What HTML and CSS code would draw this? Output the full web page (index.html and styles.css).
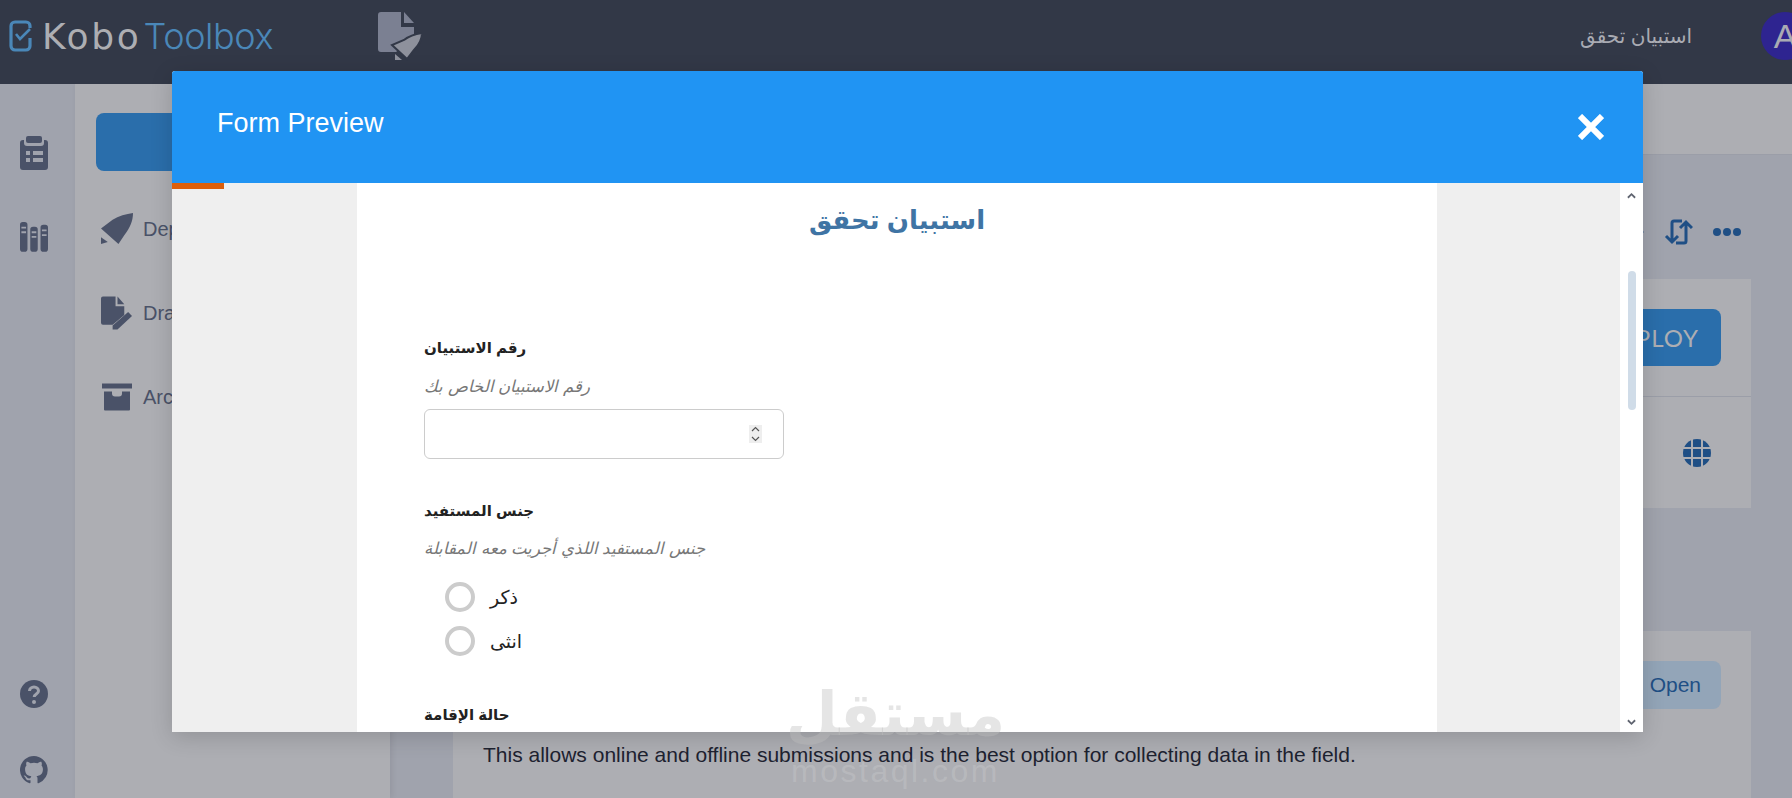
FILE: index.html
```html
<!DOCTYPE html>
<html lang="en">
<head>
    <meta charset="UTF-8">
    <meta name="viewport" content="width=device-width, initial-scale=1.0">
    <title>KoboToolbox - Form Preview</title>
    <link rel="stylesheet" href="styles.css">
</head>
<body>
    <header class="topbar">
        <div class="logo">
            <svg class="logo-mark" viewBox="0 0 23 32" fill="none" stroke="#4a87b8" stroke-width="3.200">
                <path d="M21 8V6a4 4 0 0 0-4-4H6a4 4 0 0 0-4 4v20a4 4 0 0 0 4 4h11a4 4 0 0 0 4-4v-8"/>
                <path d="M7 14l4 5 10-10" stroke-width="2.600"/>
            </svg>
            <span class="logo-text"><b>Kobo</b>Toolbox</span>
        </div>
        <svg class="form-icon" viewBox="0 0 44 49">
            <path d="M3 0h20v15h13v12L18 40H3a3 3 0 0 1-3-3V3a3 3 0 0 1 3-3z" fill="#7b8092"/>
            <path d="M26 0l10 11H26z" fill="#7b8092"/>
            <path d="M44 21c-7 1-13 3-18 7L14 33l15 14 7-9c5-5 8-11 8-17z" fill="#8e919c" stroke="#323847" stroke-width="2"/>
            <path d="M17 42l7 6h-7z" fill="#8e919c"/>
        </svg>
        <div class="topbar-right">
            <span class="form-name" dir="rtl">استبيان تحقق</span>
            <span class="avatar">A</span>
        </div>
    </header>

    <div class="page">
        <nav class="rail">
            <div class="rail-group">
                <svg class="rail-icon" viewBox="0 0 28 34">
                    <path d="M8 0h12a2 2 0 0 1 2 2v3a2 2 0 0 1-2 2H8a2 2 0 0 1-2-2V2a2 2 0 0 1 2-2z"/>
                    <path fill-rule="evenodd" d="M3 4h1v3a3 3 0 0 0 3 3h14a3 3 0 0 0 3-3V4h1a3 3 0 0 1 3 3v24a3 3 0 0 1-3 3H3a3 3 0 0 1-3-3V7a3 3 0 0 1 3-3zM6 15v4h4v-4zM13 15v4h10v-4zM6 22v4h4v-4zM13 22v4h10v-4z"/>
                </svg>
                <svg class="rail-icon" viewBox="0 0 30 32">
                    <path fill-rule="evenodd" d="M3 0h2a3 3 0 0 1 3 3v26a3 3 0 0 1-3 3H3a3 3 0 0 1-3-3V3a3 3 0 0 1 3-3zM1.500 5v2h5V5zM1.500 10v2h5v-2z"/>
                    <path fill-rule="evenodd" d="M14 5h2a3 3 0 0 1 3 3v21a3 3 0 0 1-3 3h-2a3 3 0 0 1-3-3V8a3 3 0 0 1 3-3zM12.500 10v2h5v-2zM12.500 15v2h5v-2z"/>
                    <path fill-rule="evenodd" d="M25 3h2a3 3 0 0 1 3 3v23a3 3 0 0 1-3 3h-2a3 3 0 0 1-3-3V6a3 3 0 0 1 3-3zM23.500 8v2h5V8zM23.500 13v2h5v-2z"/>
                </svg>
            </div>
            <div class="rail-group rail-bottom">
                <svg class="rail-icon" viewBox="0 0 28 28">
                    <circle cx="14" cy="14" r="14"/>
                    <path d="M9.500 11a4.500 4 0 0 1 9 0c0 3-4.300 3-4.300 6" fill="none" stroke="#a0a3ad" stroke-width="3"/>
                    <circle cx="14" cy="22" r="2" fill="#a0a3ad"/>
                </svg>
                <svg class="rail-icon" viewBox="0 0 16 16">
                    <path d="M8 0a8 8 0 0 0-2.500 15.600c.4.100.5-.2.500-.4v-1.400c-2.200.5-2.700-1-2.700-1-.4-.9-.9-1.200-.9-1.200-.7-.5.100-.5.100-.5.800.1 1.200.8 1.200.8.700 1.200 1.900.9 2.300.7.100-.5.300-.9.500-1.100-1.800-.2-3.600-.9-3.600-4 0-.9.300-1.600.8-2.100-.1-.2-.4-1 .1-2.100 0 0 .7-.2 2.200.8a7.600 7.600 0 0 1 4 0c1.500-1 2.200-.8 2.200-.8.500 1.100.2 1.900.1 2.100.5.600.8 1.300.8 2.100 0 3.100-1.900 3.700-3.700 3.900.3.300.6.800.6 1.500v2.200c0 .2.100.5.600.4A8 8 0 0 0 8 0z"/>
                </svg>
            </div>
        </nav>

        <aside class="sidebar">
            <div class="new-btn"></div>
            <ul class="side-list">
                <li>
                    <svg class="side-icon" viewBox="0 0 33 33">
                        <path d="M33 0C26 1 18 3 12 7L0 16l18 16 6-9C30 15 33 8 33 0z"/>
                        <path d="M0 25l7 5-7 2z"/>
                    </svg>
                    Deployed
                </li>
                <li>
                    <svg class="side-icon" viewBox="0 0 33 34">
                        <path d="M2 0h13v10h9v9L12 29H2a2 2 0 0 1-2-2V2a2 2 0 0 1 2-2z"/>
                        <path d="M17 0l7 8h-7z"/>
                        <path d="M28 16l4 4-15 14-5 0 0-4z"/>
                    </svg>
                    Draft
                </li>
                <li>
                    <svg class="side-icon" viewBox="-1 0 32 27">
                        <path d="M0 0h30v5H0z"/>
                        <path d="M2 8h8v2a3 3 0 0 0 3 3h4a3 3 0 0 0 3-3V8h8v18a1 1 0 0 1-1 1H3a1 1 0 0 1-1-1z"/>
                    </svg>
                    Archived
                </li>
            </ul>
        </aside>

        <main class="content">
            <div class="form-tabs"></div>
            <div class="toolbar">
                <svg class="tool-icon tool-chev" viewBox="0 0 10 10" fill="none" stroke="#1f4f85" stroke-width="2.500"><path d="M3 1l4 4-4 4"/></svg>
                <svg class="tool-icon tool-swap" viewBox="0 0 29 26" fill="none" stroke="#1f4f85" stroke-width="3">
                    <path d="M18 2h-8a2 2 0 0 0-2 2v19M2 17l6 6 6-6"/>
                    <path d="M12 24h8a2 2 0 0 0 2-2V3M16 9l6-6 6 6"/>
                </svg>
                <span class="dots"><i></i><i></i><i></i></span>
            </div>

            <section class="card">
                <div class="card-row">
                    <button class="deploy-btn">DEPLOY</button>
                </div>
                <div class="card-row card-row-lang">
                    <svg class="globe" viewBox="0 0 28 28">
                        <clipPath id="globe-clip"><circle cx="14" cy="14" r="14"/></clipPath>
                        <g clip-path="url(#globe-clip)" fill="#1f4f85">
                            <rect x="0" y="0" width="8" height="8"/><rect x="10" y="0" width="8" height="8"/><rect x="20" y="0" width="8" height="8"/>
                            <rect x="0" y="10" width="8" height="8"/><rect x="10" y="10" width="8" height="8"/><rect x="20" y="10" width="8" height="8"/>
                            <rect x="0" y="20" width="8" height="8"/><rect x="10" y="20" width="8" height="8"/><rect x="20" y="20" width="8" height="8"/>
                        </g>
                    </svg>
                </div>
            </section>

            <section class="card card-collect">
                <div class="collect-head">
                    <button class="open-btn">Open</button>
                </div>
                <p class="collect-text">This allows online and offline submissions and is the best option for collecting data in the field.</p>
            </section>
        </main>
    </div>

    <div class="modal">
        <div class="modal-head">
            <h2>Form Preview</h2>
            <svg class="close-icon" viewBox="0 0 26 26" stroke="#fff" stroke-width="6"><path d="M2 2l22 22M24 2L2 24"/></svg>
        </div>
        <div class="modal-body">
            <div class="progress"></div>
            <div class="form-gutter form-gutter-left"></div>
            <form class="form-sheet">
                <h1 class="form-title" dir="rtl">استبيان تحقق</h1>

                <div class="question q-first">
                    <label class="q-label"><span dir="rtl">رقم الاستبيان</span></label>
                    <p class="q-hint"><span dir="rtl">رقم الاستبيان الخاص بك</span></p>
                    <div class="num-wrap">
                        <input class="num-input" type="number">
                        <span class="spinner">
                            <svg viewBox="0 0 13 18" fill="none" stroke="#555" stroke-width="1.200"><path d="M3 6l3.500-3.500L10 6M3 12l3.500 3.500L10 12"/></svg>
                        </span>
                    </div>
                </div>

                <div class="question q-second">
                    <label class="q-label"><span dir="rtl">جنس المستفيد</span></label>
                    <p class="q-hint"><span dir="rtl">جنس المستفيد اللذي أجريت معه المقابلة</span></p>
                    <div class="options">
                        <label class="option"><input type="radio" name="gender"><span dir="rtl">ذكر</span></label>
                        <label class="option"><input type="radio" name="gender"><span dir="rtl">انثى</span></label>
                    </div>
                </div>

                <div class="question q-third">
                    <label class="q-label"><span dir="rtl">حالة الإقامة</span></label>
                </div>
            </form>
            <div class="form-gutter form-gutter-right"></div>
            <div class="scroll-col">
                <svg class="scroll-arrow" viewBox="0 0 10 7" fill="none" stroke="#5f6470" stroke-width="2"><path d="M1 6l4-4 4 4"/></svg>
                <div class="scroll-thumb"></div>
                <svg class="scroll-arrow scroll-arrow-down" viewBox="0 0 10 7" fill="none" stroke="#5f6470" stroke-width="2"><path d="M1 1l4 4 4-4"/></svg>
            </div>
        </div>
    </div>

    <div class="watermark">
        <span class="wm-ar" dir="rtl">مستقل</span>
        <span class="wm-en">mostaql.com</span>
    </div>
</body>
</html>
```

FILE: styles.css
```css
/* Global */
* {
    box-sizing: border-box;
}

html, body {
    height: 100%;
}

body {
    margin: 0;
    height: 798px;
    overflow: hidden;
    position: relative;
    font-family: 'Liberation Sans', 'DejaVu Sans', sans-serif;
    background: #a0a3ad;
    color: #4a5268;
}

/* Top bar */
.topbar {
    height: 84px;
    background: #323847;
    display: flex;
    align-items: center;
    position: relative;
}

.logo {
    display: flex;
    align-items: center;
    margin-left: 9px;
    width: 369px;
    margin-top: -12px;
}

.logo-mark {
    width: 23px;
    height: 32px;
}

.logo-text {
    margin-left: 10px;
    font-family: 'Inter', sans-serif;
    font-size: 36px;
    letter-spacing: -0.4px;
    font-weight: 300;
    color: #4a87b8;
}

.logo-text b {
    font-family: 'DejaVu Sans', sans-serif;
    font-weight: normal;
    letter-spacing: 2.700px;
    margin-right: 2px;
    color: #adaeb3;
}

.form-icon {
    width: 44px;
    height: 49px;
    margin-top: -11px;
}

.topbar-right {
    margin-left: auto;
    display: flex;
    align-items: center;
    margin-top: -12px;
    margin-right: -17px;
}

.form-name {
    font-size: 20px;
    color: #a9abb3;
    margin-right: 69px;
}

.avatar {
    width: 48px;
    height: 48px;
    border-radius: 50%;
    background: #2e2490;
    color: #a9abb3;
    font-size: 34px;
    display: flex;
    align-items: center;
    justify-content: center;
}

/* Page frame */
.page {
    display: flex;
    height: 714px;
}

.rail {
    width: 75px;
    display: flex;
    flex-direction: column;
    justify-content: space-between;
    background: #a0a3ad;
    padding: 52px 8px 14px 0;
}

.rail-group {
    display: flex;
    flex-direction: column;
    align-items: center;
    gap: 52px;
}

.rail-bottom {
    gap: 48px;
}

.rail-icon {
    width: 28px;
    fill: #4a5268;
}

.sidebar {
    width: 315px;
    background: #adaeb3;
    padding: 29px 20px 0 21px;
    box-shadow: 2px 0 6px rgba(0, 0, 0, 0.08);
}

.new-btn {
    height: 58px;
    border-radius: 8px;
    background: #2a6eab;
}

.side-list {
    list-style: none;
    margin: 41px 0 0;
    padding: 0 0 0 5px;
}

.side-list li {
    display: flex;
    align-items: center;
    gap: 10px;
    height: 34px;
    margin-bottom: 50px;
    font-size: 20px;
}

.side-icon {
    width: 32px;
    height: 34px;
    fill: #4a5268;
}

/* Main column behind the modal */
.content {
    flex: 1;
    padding-right: 41px;
}

.form-tabs {
    height: 71px;
    margin-right: -41px;
    background: #adaeb3;
    border-bottom: 1px solid #9b9ea8;
}

.toolbar {
    height: 124px;
    display: flex;
    align-items: center;
    justify-content: flex-end;
    padding: 30px 10px 0 62px;
}

.tool-icon {
    display: block;
}

.tool-chev {
    width: 10px;
    height: 10px;
    margin-right: 19px;
}

.tool-swap {
    width: 29px;
    height: 26px;
    margin-right: 20px;
}

.dots {
    display: flex;
    gap: 2px;
}

.dots i {
    width: 8px;
    height: 8px;
    border-radius: 50%;
    background: #1f4f85;
}

.card {
    margin-left: 62px;
    background: #adaeb3;
}

.card-row {
    height: 118px;
    display: flex;
    align-items: center;
    justify-content: flex-end;
    padding-right: 30px;
    border-bottom: 1px solid #9b9ea8;
}

.card-row-lang {
    height: 111px;
    border-bottom: none;
    padding-right: 40px;
}

.deploy-btn {
    width: 150px;
    height: 57px;
    border: none;
    border-radius: 8px;
    background: #2a6eab;
    color: #adaeb3;
    font-family: 'Lato', sans-serif;
    font-size: 24px;
    letter-spacing: 1px;
    text-align: right;
    padding: 0 22px 0 0;
}

.globe {
    width: 28px;
    height: 28px;
}

.card-collect {
    margin-top: 123px;
    margin-left: 63px;
    height: 167px;
    padding: 30px 30px 0 30px;
}

.collect-head {
    display: flex;
    justify-content: flex-end;
}

.open-btn {
    width: 140px;
    height: 48px;
    border: none;
    border-radius: 8px;
    background: #93a5b8;
    color: #1f4f85;
    font-family: 'Liberation Sans', sans-serif;
    font-size: 21px;
    text-align: right;
    padding: 0 20px 0 0;
}

.collect-text {
    margin: 34px 0 0;
    font-size: 21px;
    line-height: 24px;
    color: #1d2230;
}

/* Modal */
.modal {
    position: absolute;
    top: 71px;
    left: 172px;
    width: 1471px;
    height: 661px;
    display: flex;
    flex-direction: column;
    border-radius: 3px 3px 0 0;
    overflow: hidden;
    background: #fff;
    box-shadow: 0 5px 22px rgba(0, 0, 0, 0.16);
}

.modal-head {
    height: 112px;
    flex-shrink: 0;
    background: #2094f3;
    display: flex;
    align-items: center;
    justify-content: space-between;
    padding: 0 39px 0 45px;
    color: #fff;
}

.modal-head h2 {
    margin: -7px 0 0;
    font-size: 27px;
    font-weight: normal;
}

.close-icon {
    width: 26px;
    height: 26px;
}

.modal-body {
    flex: 1;
    min-height: 0;
    display: flex;
    position: relative;
}

.progress {
    position: absolute;
    top: 0;
    left: 0;
    width: 52px;
    height: 6px;
    background: #dc5f0b;
}

.form-gutter {
    background: #efefef;
}

.form-gutter-left {
    width: 185px;
}

.form-gutter-right {
    width: 183px;
}

.form-sheet {
    width: 1080px;
    padding: 17px 67px 0;
    overflow: hidden;
    color: #222;
}

.form-title {
    margin: 0;
    height: 40px;
    line-height: 40px;
    text-align: center;
    font-size: 26px;
    color: #3f74a4;
}

.q-label {
    display: block;
    font-size: 15px;
    font-weight: bold;
    line-height: 24px;
}

.q-hint {
    margin: 16px 0 0;
    font-size: 16.500px;
    font-style: italic;
    line-height: 20px;
    color: #777;
}

.q-first {
    margin-top: 96px;
}

.q-second {
    margin-top: 40px;
}

.q-second .q-hint {
    margin-top: 15px;
}

.q-third {
    margin-top: 47px;
}

.num-wrap {
    position: relative;
    width: 360px;
    margin-top: 13px;
}

.num-input {
    display: block;
    width: 100%;
    height: 50px;
    padding: 0 21px;
    font-size: 16px;
    border: 1px solid #ccc;
    border-radius: 6px;
    background: #fff;
    appearance: textfield;
}

.spinner {
    position: absolute;
    top: 16px;
    right: 22px;
    width: 13px;
    height: 18px;
    background: #eee;
}

.spinner svg {
    display: block;
}

.options {
    margin-top: 24px;
    padding-left: 21px;
    display: flex;
    flex-direction: column;
    gap: 14px;
}

.option {
    display: flex;
    align-items: center;
    gap: 15px;
    font-size: 19px;
}

.option input {
    appearance: none;
    width: 30px;
    height: 30px;
    margin: 0;
    border: 4px solid #ccc;
    border-radius: 50%;
}

.scroll-col {
    width: 23px;
    display: flex;
    flex-direction: column;
    align-items: center;
    padding-top: 9px;
}

.scroll-arrow {
    width: 9px;
    height: 7px;
}

.scroll-thumb {
    width: 8px;
    height: 139px;
    margin-top: 72px;
    border-radius: 4px;
    background: #d0dce8;
}

.scroll-arrow-down {
    margin-top: auto;
    margin-bottom: 6px;
}

/* Watermark on top of everything */
.watermark {
    position: absolute;
    top: 676px;
    left: 791px;
    width: 209px;
    display: flex;
    flex-direction: column;
    align-items: center;
    pointer-events: none;
}

.wm-ar {
    font-size: 60px;
    font-weight: bold;
    line-height: 78px;
    color: rgba(190, 190, 190, 0.4);
}

.wm-en {
    font-size: 32px;
    line-height: 34px;
    letter-spacing: 2.500px;
    color: rgba(255, 255, 255, 0.14);
}
```
